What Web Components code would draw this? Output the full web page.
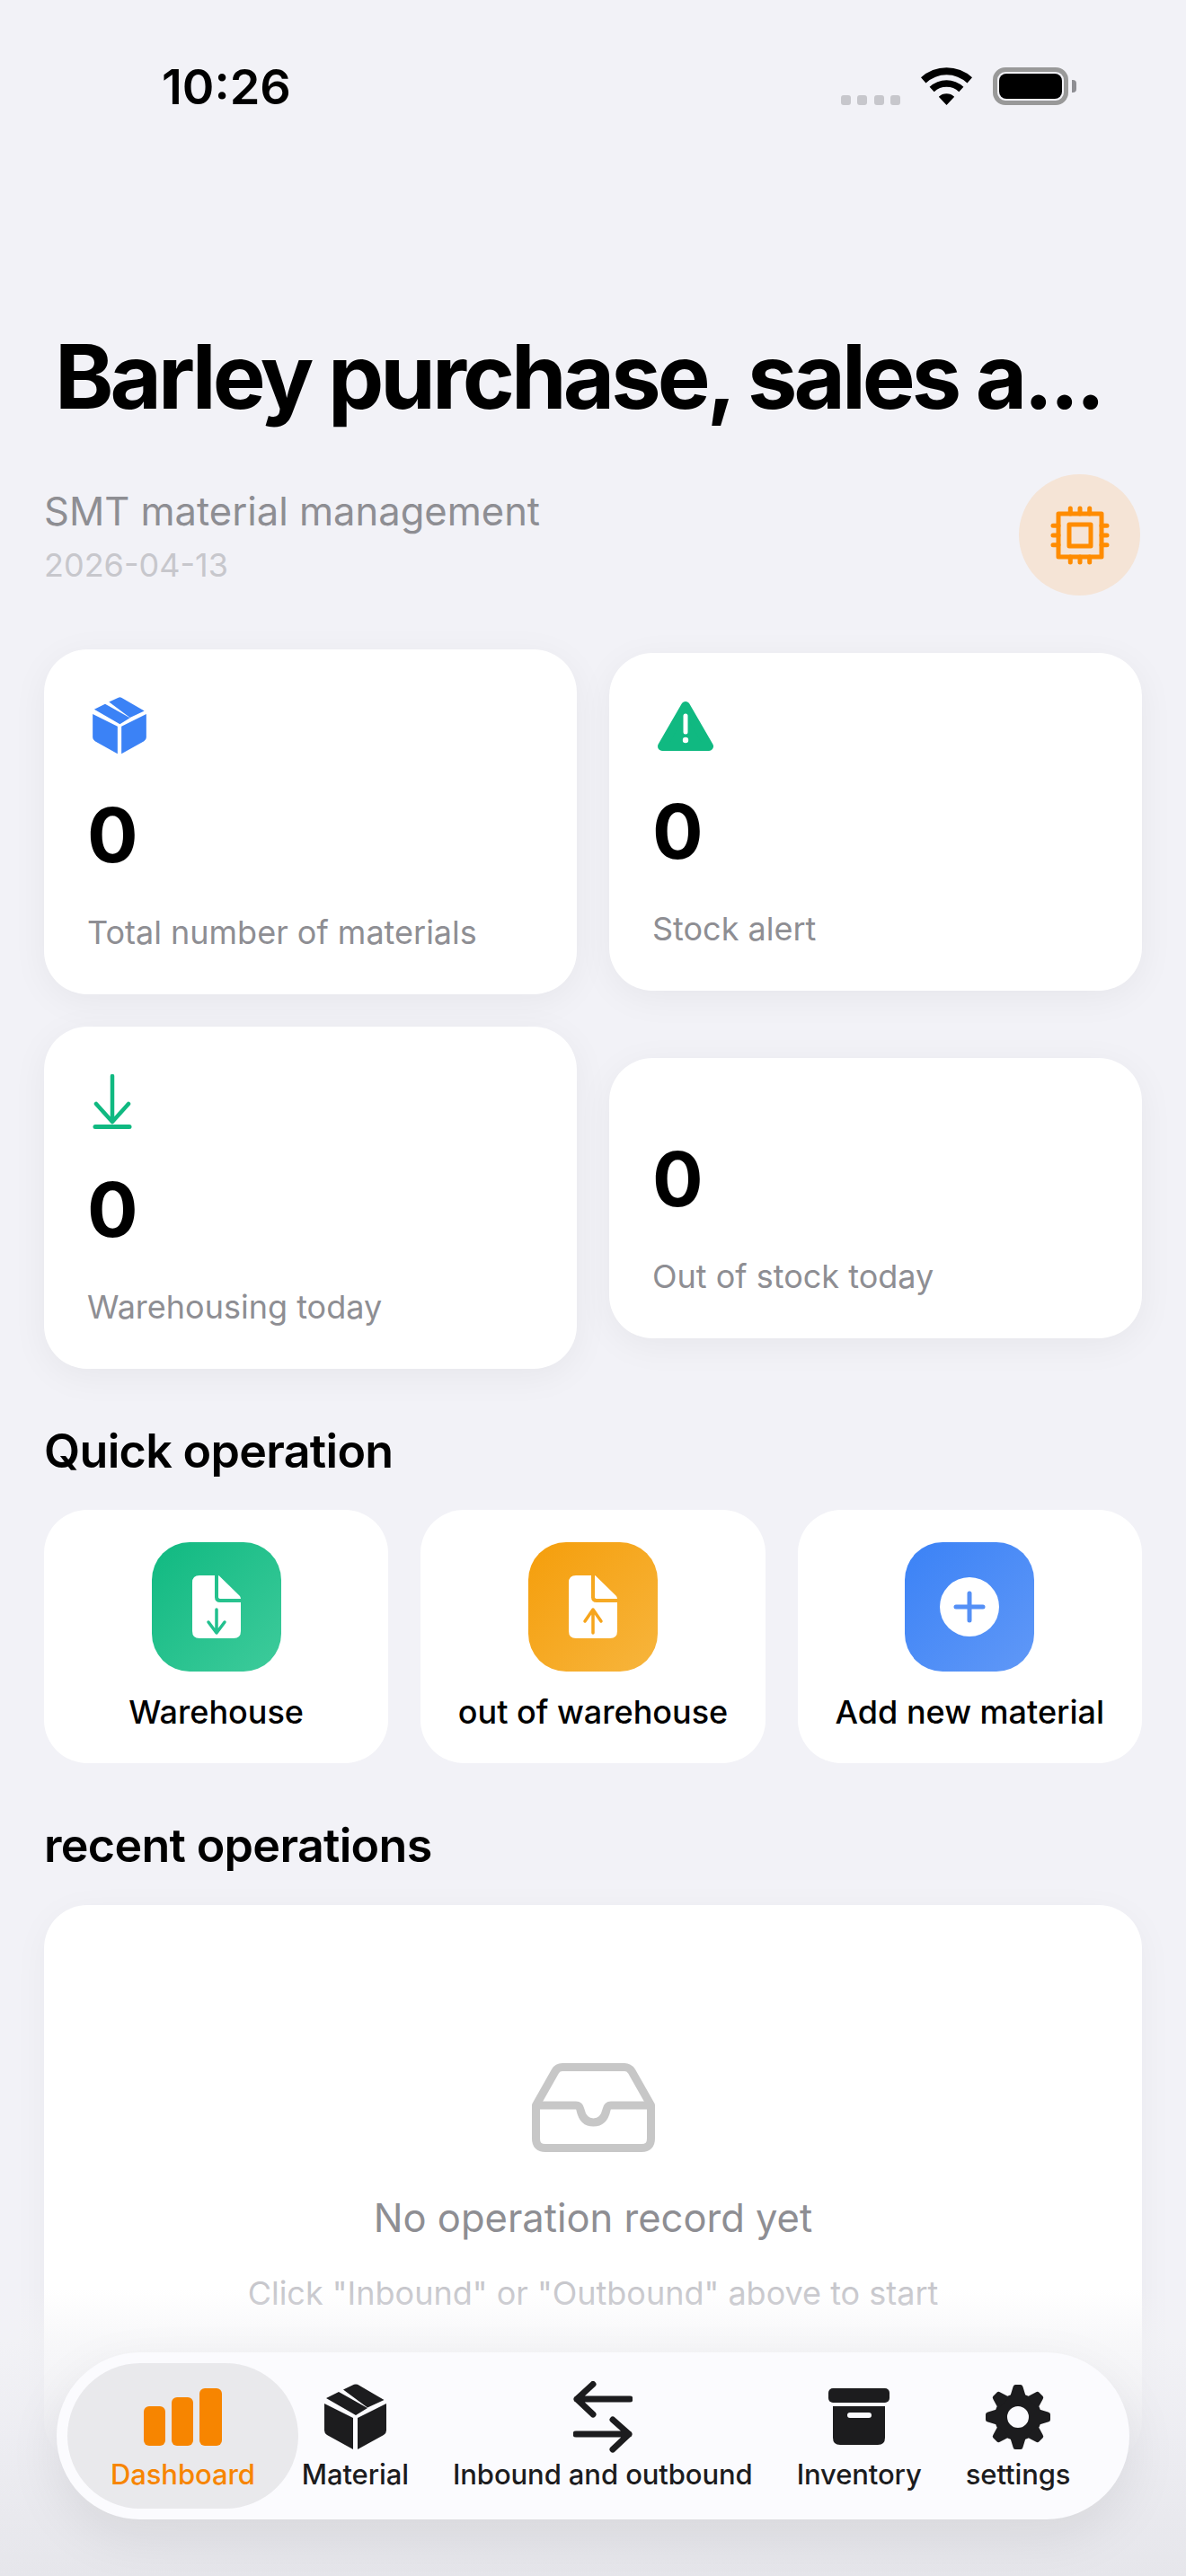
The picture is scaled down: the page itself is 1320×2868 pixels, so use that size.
<!DOCTYPE html>
<html lang="en">
<head>
<meta charset="utf-8">
<title>Dashboard</title>
<style>
  html, body { margin: 0; padding: 0; background: #f2f2f7; overflow: hidden; }
  body { font-family: Inter, "Noto Sans", sans-serif; }
</style>
</head>
<body>
<app-screen>
  <status-bar slot="status" time="10:26"></status-bar>
  <page-header title="Barley purchase, sales a..." subtitle="SMT material management" date="2026-04-13"></page-header>

  <stat-grid>
    <stat-card number="0" label="Total number of materials" style="--icon-h:72px">
      <svg slot="icon" width="60" height="64" viewBox="0 0 69 74" fill="#3b82f6"><path d="M21 6.500 33 .8q2-.8 4 0L66.500 18 48 26.500ZM2 16 16 9 48 27 35 35ZM0 22 32 38V73L3 57Q0 55 0 52ZM37 38 69 22V52Q69 55 66 57L37 73Z"/></svg>
    </stat-card>
    <stat-card number="0" label="Stock alert" style="--icon-h:64px">
      <svg slot="icon" width="62" height="57" viewBox="0 0 62 57"><path d="M31 6 57 51H5Z" fill="#10b981" stroke="#10b981" stroke-width="10" stroke-linejoin="round"/><path d="M31 17V35" stroke="#fff" stroke-width="5" stroke-linecap="round"/><circle cx="31" cy="44" r="3.200" fill="#fff"/></svg>
    </stat-card>
    <stat-card number="0" label="Warehousing today" style="--icon-h:69px">
      <svg slot="icon" width="44" height="61" viewBox="0 0 44 61" fill="none" stroke="#10b981" stroke-linecap="round" stroke-linejoin="round"><path d="M22 2V52M4 33 22 53 40 33" stroke-width="4.500"/><path d="M3 58.500H41" stroke-width="5"/></svg>
    </stat-card>
    <stat-card number="0" label="Out of stock today"></stat-card>
  </stat-grid>

  <section-title text="Quick operation" style="--top:59px;--bottom:32px"></section-title>
  <quick-grid>
    <quick-action label="Warehouse" from="#10b981" to="#3ecb9b">
      <svg slot="icon" width="54" height="70" viewBox="0 0 54 70"><path fill="#fff" d="M8 0H25V24Q25 30 31 30H54V62Q54 70 46 70H8Q0 70 0 62V8Q0 0 8 0ZM29 0Q30 0 31 1.500L53 23Q54 25 54 26H32Q29 26 29 24Z"/><path d="M27 38V63M18 52 27 64 36 52" fill="none" stroke="#22c08e" stroke-width="3.500" stroke-linecap="round" stroke-linejoin="round"/></svg>
    </quick-action>
    <quick-action label="out of warehouse" from="#f59e0b" to="#f7b53d">
      <svg slot="icon" width="54" height="70" viewBox="0 0 54 70"><path fill="#fff" d="M8 0H25V24Q25 30 31 30H54V62Q54 70 46 70H8Q0 70 0 62V8Q0 0 8 0ZM29 0Q30 0 31 1.500L53 23Q54 25 54 26H32Q29 26 29 24Z"/><path d="M27 64V39M18 51 27 38 36 51" fill="none" stroke="#f6a51c" stroke-width="3.500" stroke-linecap="round" stroke-linejoin="round"/></svg>
    </quick-action>
    <quick-action label="Add new material" from="#3b82f6" to="#6098f7">
      <svg slot="icon" width="66" height="66" viewBox="0 0 66 66"><circle cx="33" cy="33" r="33" fill="#fff"/><path d="M33 18V48M18 33H48" stroke="#5590f6" stroke-width="5" stroke-linecap="round"/></svg>
    </quick-action>
  </quick-grid>

  <section-title text="recent operations" style="--top:59px;--bottom:33px"></section-title>
  <empty-panel title="No operation record yet" hint='Click "Inbound" or "Outbound" above to start'>
    <svg slot="icon" width="137" height="99" viewBox="0 0 137 99" fill="none" stroke="#c7c7c7" stroke-width="9" stroke-linejoin="round"><path d="M4.500 47V84Q4.500 94.500 15 94.500H122Q132.500 94.500 132.500 84V47L111 9Q108 4.500 103 4.500H34Q28.500 4.500 26 9Z"/><path d="M4.500 47H49Q53 47 54 52 57 66 68.500 66 80 66 83 52 84 47 88 47H132.500"/></svg>
  </empty-panel>

  <tab-bar slot="overlay">
    <tab-item label="Dashboard" active>
      <svg slot="icon" width="87" height="64" viewBox="0 0 87 64" fill="#f78500"><rect y="20" width="24" height="44" rx="6"/><rect x="31" y="10" width="24" height="54" rx="6"/><rect x="62" width="25" height="64" rx="6"/></svg>
    </tab-item>
    <tab-item label="Material">
      <svg slot="icon" width="69" height="74" viewBox="0 0 69 74" fill="#1c1c1e"><path d="M21 6.500 33 .8q2-.8 4 0L66.500 18 48 26.500ZM2 16 16 9 48 27 35 35ZM0 22 32 38V73L3 57Q0 55 0 52ZM37 38 69 22V52Q69 55 66 57L37 73Z"/></svg>
    </tab-item>
    <tab-item label="Inbound and outbound">
      <svg slot="icon" width="66" height="80" viewBox="0 0 66 80" fill="none" stroke="#1c1c1e" stroke-width="7" stroke-linecap="round" stroke-linejoin="round"><path d="M63 20H4M22 3.500 4 20 22 37"/><path d="M3 59H62M44 43 62 59 44 76"/></svg>
    </tab-item>
    <tab-item label="Inventory">
      <svg slot="icon" width="68" height="64" viewBox="0 0 68 64" fill="#1c1c1e"><rect width="68" height="16" rx="5"/><path fill-rule="evenodd" d="M5 20H63V55Q63 63 55 63H13Q5 63 5 55ZM24 27Q21 27 21 30 21 33 24 33H45Q48 33 48 30 48 27 45 27Z"/></svg>
    </tab-item>
    <tab-item label="settings">
      <svg slot="icon" width="72" height="72" viewBox="0 0 72 72" fill="#1c1c1e">
        <circle cx="36" cy="36" r="19" fill="none" stroke="#1c1c1e" stroke-width="14"/>
        <g transform="translate(36 36)">
          <path d="M-9-22-5.500-33.500Q-5-36-3-36H3Q5-36 5.500-33.500L9-22Z"/>
          <path transform="rotate(45)" d="M-9-22-5.500-33.500Q-5-36-3-36H3Q5-36 5.500-33.500L9-22Z"/>
          <path transform="rotate(90)" d="M-9-22-5.500-33.500Q-5-36-3-36H3Q5-36 5.500-33.500L9-22Z"/>
          <path transform="rotate(135)" d="M-9-22-5.500-33.500Q-5-36-3-36H3Q5-36 5.500-33.500L9-22Z"/>
          <path transform="rotate(180)" d="M-9-22-5.500-33.500Q-5-36-3-36H3Q5-36 5.500-33.500L9-22Z"/>
          <path transform="rotate(225)" d="M-9-22-5.500-33.500Q-5-36-3-36H3Q5-36 5.500-33.500L9-22Z"/>
          <path transform="rotate(270)" d="M-9-22-5.500-33.500Q-5-36-3-36H3Q5-36 5.500-33.500L9-22Z"/>
          <path transform="rotate(315)" d="M-9-22-5.500-33.500Q-5-36-3-36H3Q5-36 5.500-33.500L9-22Z"/>
        </g>
      </svg>
    </tab-item>
  </tab-bar>
</app-screen>

<script>
// small helper, every element below is the same shape
function shadow(el, html) {
    el.attachShadow({ mode: 'open' }).innerHTML = html;
}

// --- SCREEN ---
class AppScreen extends HTMLElement {
    connectedCallback() {
        shadow(this, `
            <style>
                :host { display: block; position: relative; width: 1320px; height: 2868px; overflow: hidden;
                        background: #f2f2f7; font-family: Inter, "Noto Sans", sans-serif; }
                .content { padding: 0 49px; }
                .fade { position: absolute; left: 0; right: 0; bottom: 0; height: 320px;
                        background: linear-gradient(to bottom, rgba(240,240,243,0) 0, rgba(242,242,245,.55) 18%, rgba(236,236,241,.9) 55%, #e6e6eb 100%); }
            </style>
            <slot name="status"></slot>
            <div class="content"><slot></slot></div>
            <div class="fade"></div>
            <slot name="overlay"></slot>
        `);
    }
}
customElements.define('app-screen', AppScreen);

// --- STATUS BAR ---
class StatusBar extends HTMLElement {
    connectedCallback() {
        shadow(this, `
            <style>
                :host { display: flex; align-items: flex-start; justify-content: space-between; height: 170px; box-sizing: border-box;
                        padding: 75px 131px 0 180px; }
                .time { font-size: 54px; line-height: 44px; font-weight: 600; color: #000; }
                .right { display: flex; align-items: flex-end; height: 42px; }
                .dots { display: flex; gap: 7.300px; margin-right: 23px; }
                .dots i { width: 11px; height: 11px; border-radius: 3px; background: #c7c7cc; }
                .wifi { margin-right: 23px; display: block; }
                .batt { width: 84px; height: 42px; box-sizing: border-box; border: 5px solid #999; border-radius: 14px; padding: 2px; position: relative; }
                .batt b { display: block; height: 100%; background: #000; border-radius: 8px; }
                .batt:after { content: ""; position: absolute; right: -14px; top: 9px; width: 5px; height: 14px; background: #8e8e93; border-radius: 0 4px 4px 0; }
            </style>
            <div class="time">${this.getAttribute('time')}</div>
            <div class="right">
                <div class="dots"><i></i><i></i><i></i><i></i></div>
                <svg class="wifi" width="57" height="42" viewBox="0 0 57 42"><path d="M0 11.300A42 42 0 0 1 57 11.300L51.500 17.400A33.700 33.700 0 0 0 5.500 17.400ZM9.600 21.800A27.700 27.700 0 0 1 47.400 21.800L42.300 27.200A20.300 20.300 0 0 0 14.700 27.200ZM19.800 32.700A12.700 12.700 0 0 1 37.200 32.700L28.500 42Z"/></svg>
                <div class="batt"><b></b></div>
            </div>
        `);
    }
}
customElements.define('status-bar', StatusBar);

// --- HEADER ---
class PageHeader extends HTMLElement {
    connectedCallback() {
        shadow(this, `
            <style>
                :host { display: block; }
                h1 { margin: 187px 0 0 12px; font-size: 99px; line-height: 124px; font-weight: 700; letter-spacing: -4px; color: #000; white-space: nowrap; }
                .row { display: flex; align-items: center; justify-content: space-between; margin-top: 47px; margin-bottom: 60px; height: 135px; }
                .sub { font-size: 43.500px; line-height: 60px; color: #8e8e93; }
                .date { font-size: 36px; line-height: 48px; color: #c7c7cc; margin-top: 6px; }
                .chip { width: 135px; height: 135px; margin-right: 2px; border-radius: 50%; background: #f5e4d6; display: flex; align-items: center; justify-content: center; }
            </style>
            <h1>${this.getAttribute('title')}</h1>
            <div class="row">
                <div>
                    <div class="sub">${this.getAttribute('subtitle')}</div>
                    <div class="date">${this.getAttribute('date')}</div>
                </div>
                <div class="chip">
                    <svg width="72" height="72" viewBox="0 0 72 72" fill="none" stroke="#ff8c00" stroke-width="5" stroke-linecap="round" stroke-linejoin="round">
                        <rect x="12" y="12" width="48" height="48"/><rect x="24" y="24" width="24" height="24"/>
                        <path d="M25.300 6V12M36 6V12M46.700 6V12M25.300 60V66M36 60V66M46.700 60V66M6 25.300H12M6 36H12M6 46.700H12M60 25.300H66M60 36H66M60 46.700H66"/>
                    </svg>
                </div>
            </div>
        `);
    }
}
customElements.define('page-header', PageHeader);

// --- STAT GRID + CARD ---
class StatGrid extends HTMLElement {
    connectedCallback() {
        shadow(this, `
            <style>:host { display: grid; grid-template-columns: 1fr 1fr; gap: 36px; align-items: center; }</style>
            <slot></slot>
        `);
    }
}
customElements.define('stat-grid', StatGrid);

class StatCard extends HTMLElement {
    connectedCallback() {
        shadow(this, `
            <style>
                :host { display: block; background: #fff; border-radius: 48px; padding: 48px 48px 47px; box-shadow: 0 8px 40px rgba(0,0,0,.05); }
                .icon { height: var(--icon-h, 0); margin-left: 6px; }
                .icon ::slotted(svg) { display: block; position: relative; top: 5px; }
                .number { margin: 36px 0 0; font-size: 84px; line-height: 102px; font-weight: 700; color: #000; }
                .label { margin-top: 35px; font-size: 36px; line-height: 44px; color: #8e8e93; }
            </style>
            <div class="icon"><slot name="icon"></slot></div>
            <div class="number">${this.getAttribute('number')}</div>
            <div class="label">${this.getAttribute('label')}</div>
        `);
    }
}
customElements.define('stat-card', StatCard);

// --- SECTION TITLE ---
class SectionTitle extends HTMLElement {
    connectedCallback() {
        shadow(this, `
            <style>
                :host { display: block; margin: var(--top, 0) 0 var(--bottom, 0); font-size: 52px; line-height: 66px; font-weight: 600; letter-spacing: -.7px; color: #000; }
            </style>
            ${this.getAttribute('text')}
        `);
    }
}
customElements.define('section-title', SectionTitle);

// --- QUICK ACTIONS ---
class QuickGrid extends HTMLElement {
    connectedCallback() {
        shadow(this, `
            <style>:host { display: grid; grid-template-columns: repeat(3, 1fr); gap: 36px; }</style>
            <slot></slot>
        `);
    }
}
customElements.define('quick-grid', QuickGrid);

class QuickAction extends HTMLElement {
    connectedCallback() {
        const from = this.getAttribute('from');
        const to = this.getAttribute('to');
        shadow(this, `
            <style>
                :host { display: flex; flex-direction: column; align-items: center; height: 282px; box-sizing: border-box; padding-top: 36px; background: #fff; border-radius: 48px; }
                .tile { width: 144px; height: 144px; border-radius: 42px; background: linear-gradient(135deg, ${from}, ${to}); display: flex; align-items: center; justify-content: center; }
                .label { margin-top: 23px; font-size: 36px; line-height: 44px; font-weight: 450; color: #000; white-space: nowrap; }
            </style>
            <div class="tile"><slot name="icon"></slot></div>
            <div class="label">${this.getAttribute('label')}</div>
        `);
    }
}
customElements.define('quick-action', QuickAction);

// --- EMPTY STATE ---
class EmptyPanel extends HTMLElement {
    connectedCallback() {
        shadow(this, `
            <style>
                :host { display: flex; flex-direction: column; align-items: center; box-sizing: border-box; height: 622px; padding-top: 176px;
                        background: #fff; border-radius: 48px; box-shadow: 0 8px 40px rgba(0,0,0,.04); }
                .icon ::slotted(svg) { display: block; }
                .title { margin-top: 43px; font-size: 43.500px; line-height: 60px; color: #8e8e93; }
                .hint { margin-top: 32px; font-size: 36px; line-height: 44px; color: #c7c7cc; }
            </style>
            <div class="icon"><slot name="icon"></slot></div>
            <div class="title">${this.getAttribute('title')}</div>
            <div class="hint">${this.getAttribute('hint')}</div>
        `);
    }
}
customElements.define('empty-panel', EmptyPanel);

// --- TAB BAR ---
class TabBar extends HTMLElement {
    connectedCallback() {
        shadow(this, `
            <style>
                :host { position: absolute; left: 63px; top: 2619px; width: 1194px; height: 186px; box-sizing: border-box; padding: 12px 12px;
                        display: flex; gap: 49px; background: #fbfbfe; border-radius: 93px; box-shadow: 0 20px 60px rgba(0,0,0,.08); }
            </style>
            <slot></slot>
        `);
    }
}
customElements.define('tab-bar', TabBar);

class TabItem extends HTMLElement {
    connectedCallback() {
        shadow(this, `
            <style>
                :host { display: flex; flex-direction: column; align-items: center; height: 162px; box-sizing: border-box; padding-top: 18px; color: #1c1c1e; }
                :host([active]) { padding: 18px 48px 0; margin-right: -45px; background: #e9e9ec; border-radius: 81px; color: #f78500; }
                .icon { height: 84px; display: flex; align-items: center; justify-content: center; }
                .icon ::slotted(svg) { display: block; }
                .label { font-size: 31px; line-height: 44px; font-weight: 450; letter-spacing: -.1px; white-space: nowrap; }
            </style>
            <div class="icon"><slot name="icon"></slot></div>
            <div class="label">${this.getAttribute('label')}</div>
        `);
    }
}
customElements.define('tab-item', TabItem);
</script>
</body>
</html>
